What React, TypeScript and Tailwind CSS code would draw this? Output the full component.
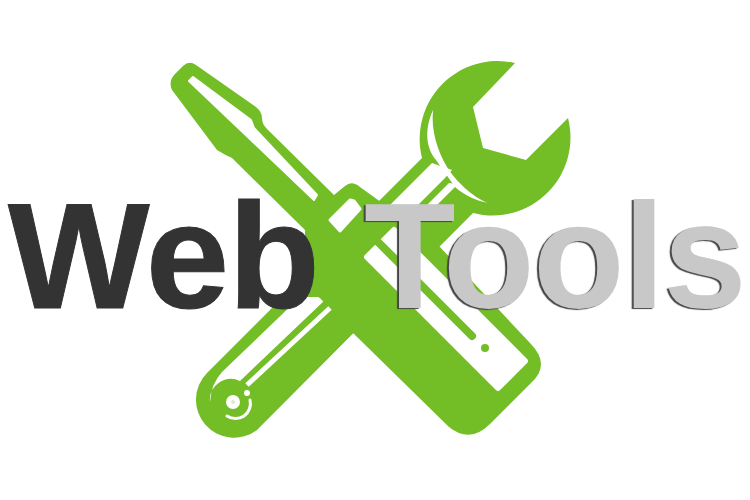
const GREEN = "#73bd27";

// crossed screwdriver and wrench, drawn back to front
function ToolsMark() {
  return (
    <svg className="absolute inset-0" width="750" height="500" viewBox="0 0 750 500" fill="none">
      {/* wrench */}
      <path
        fill={GREEN}
        d="M515 63 A78 78 0 0 0 422 158 L207 373 A38 38 0 0 0 257 430 L473 213 A78 78 0 0 0 568 118 L526 160 L483 148 L473 107 Z"
      />
      <path fill="#fff" d="M210 402 Q211 384 222 372 L300 297 L318 297 L325 300 L240 381 A21 21 0 0 0 210 402 Z" />
      <path fill="#fff" d="M432 163 L380 215 L408 215 L445 178 L452 170 Z" />
      <path fill="#fff" d="M449 183 L458 184 L425 217 L415 217 Z" />
      <path
        fill="#fff"
        d="M433 110 C424 130 426 148 436 160 L455 187 C465 196 478 201 488 203 C472 197 455 180 447 167 C437 150 431 130 433 110 Z"
      />

      {/* screwdriver */}
      <path
        fill={GREEN}
        d="M172 90 Q168 81 175 74 L183 66 Q189 60 196 65 L256 107 Q262 112 262 118 Q262 124 267 129 L334 195 L345 186 Q352 180 360 187 L378 200 L440 247 L530 343 Q552 365 530 384 L490 424 Q470 444 449 427 L353 333 L318 296 L305 270 L305 230 L232 158 Q225 155 217 150 Z"
      />
      <path
        fill="#fff"
        stroke="#fff"
        strokeWidth="2"
        strokeLinejoin="round"
        d="M189 81 L193 77 L251 120 L254 128 L317 195 L314 200 Z"
      />
      <path fill="#fff" stroke="#fff" strokeWidth="3" strokeLinejoin="round" d="M330 220 L340 231 L360 209 L354 201 L350 200 Z" />
      <path fill="#fff" stroke="#fff" strokeWidth="6" strokeLinejoin="round" d="M367 257 L394 230 L525 361 L498 388 Z" />
      <path stroke={GREEN} strokeWidth="8" strokeLinecap="round" d="M378 242 L472 336" />
      <circle cx="485" cy="348" r="4" fill={GREEN} />

      {/* wrench end details */}
      <path stroke="#fff" strokeWidth="5" d="M247 385 L330 308" />
      <circle cx="247" cy="393" r="3" fill="#fff" />
      <circle cx="233" cy="402" r="7" fill="#fff" />
      <circle cx="233" cy="402" r="2" fill="#d9ecc2" />
      <path stroke="#fff" strokeWidth="3" strokeLinecap="round" d="M227 416 A15 15 0 0 0 250 400" />
    </svg>
  );
}

export default function App() {
  return (
    <div className="relative h-[500px] w-[750px] overflow-hidden bg-white blur-[0.5px] [font-family:'Liberation_Sans',Arial,sans-serif]">
      <ToolsMark />
      <div className="relative flex pl-[8px] pt-[181px] text-[150px] font-bold leading-[150px] tracking-[-1px]">
        <span className="text-[#333333] [-webkit-text-stroke:1px_#333333]">Web</span>
        <span className="ml-[45px] tracking-[-1.5px] text-[#c8c8c8] [text-shadow:-2px_1px_1px_#444]">Tools</span>
      </div>
    </div>
  );
}
